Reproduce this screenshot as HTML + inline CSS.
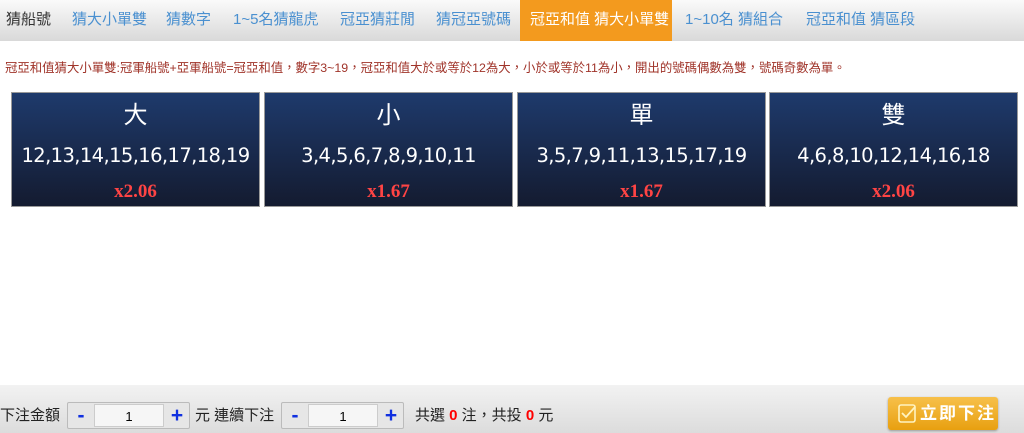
<!DOCTYPE html>
<html><head><meta charset="utf-8"><style>
*{margin:0;padding:0;box-sizing:border-box}
body{width:1024px;height:433px;background:#fff;font-family:"Liberation Sans","Noto Sans CJK TC",sans-serif;position:relative;overflow:hidden}
.nav{position:absolute;left:0;top:0;width:1024px;height:41px;background:linear-gradient(#fafafa,#d9d9d9)}
.nav span{position:absolute;top:0;line-height:40px;font-size:15px;color:#4a90d0;white-space:nowrap}
.nav .act{background:#f39a1e;color:#fff;height:41px;padding:0 10px}
.desc{position:absolute;left:5px;top:58px;font-size:12.4px;color:#a0342a;white-space:nowrap}
.box{position:absolute;top:92px;width:249px;height:115px;background:linear-gradient(#1e3a6c,#141b30);border:1px solid #999;text-align:center;color:#fff}
.box .t{font-size:24px;margin-top:8px;line-height:30px}
.box .n{font-size:19.5px;margin-top:12px;line-height:26px;font-family:"DejaVu Sans","Noto Sans CJK TC",sans-serif;letter-spacing:-0.6px}
.box .o{font-family:"Liberation Serif",serif;font-weight:bold;color:#f44;font-size:19px;margin-top:12px}
.bot{position:absolute;left:0;top:385px;width:1024px;height:48px;background:linear-gradient(#f2f2f2,#dcdcdc)}
.bot .l{position:absolute;top:19px;font-size:15px;color:#222;white-space:nowrap}
.pm{position:absolute;top:17px;width:123px;height:27px;border:1px solid #bbb;background:#e6e6e6;border-radius:2px}
.pm b{position:absolute;top:0;width:26px;line-height:25px;text-align:center;color:#1030e0;font-size:21px}
.pm i{position:absolute;left:26px;top:1px;width:70px;height:23px;background:#f6f6f6;font-style:normal;text-align:center;line-height:23px;font-size:13px;border:1px solid #ccc}
.red{color:#f00;font-weight:bold}
.btn{position:absolute;left:888px;top:397px;width:110px;height:33px;background:linear-gradient(#f7c04a,#e8a010);border-radius:3px;color:#fff;font-weight:bold;font-size:17px;line-height:33px;padding-left:32px;letter-spacing:2px;box-shadow:0 1px 2px #999}
.btn svg{position:absolute;left:10px;top:7px}
</style></head><body>
<div class="nav">
<span style="left:6px;color:#333">猜船號</span>
<span style="left:72px">猜大小單雙</span>
<span style="left:166px">猜數字</span>
<span style="left:233px">1~5名猜龍虎</span>
<span style="left:340px">冠亞猜莊閒</span>
<span style="left:436px">猜冠亞號碼</span>
<span class="act" style="left:520px;width:152px">冠亞和值 猜大小單雙</span>
<span style="left:685px">1~10名 猜組合</span>
<span style="left:806px">冠亞和值 猜區段</span>
</div>
<div class="desc">冠亞和值猜大小單雙:冠軍船號+亞軍船號=冠亞和值，數字3~19，冠亞和值大於或等於12為大，小於或等於11為小，開出的號碼偶數為雙，號碼奇數為單。</div>
<div class="box" style="left:11px"><div class="t">大</div><div class="n">12,13,14,15,16,17,18,19</div><div class="o">x2.06</div></div>
<div class="box" style="left:264px"><div class="t">小</div><div class="n">3,4,5,6,7,8,9,10,11</div><div class="o">x1.67</div></div>
<div class="box" style="left:517px"><div class="t">單</div><div class="n">3,5,7,9,11,13,15,17,19</div><div class="o">x1.67</div></div>
<div class="box" style="left:769px"><div class="t">雙</div><div class="n">4,6,8,10,12,14,16,18</div><div class="o">x2.06</div></div>
<div class="bot">
<span class="l" style="left:0">下注金額</span>
<div class="pm" style="left:67px"><b style="left:0">-</b><i>1</i><b style="left:96px">+</b></div>
<span class="l" style="left:195px">元 連續下注</span>
<div class="pm" style="left:281px"><b style="left:0">-</b><i>1</i><b style="left:96px">+</b></div>
<span class="l" style="left:415px">共選 <span class="red">0</span> 注，共投 <span class="red">0</span> 元</span>
</div>
<div class="btn"><svg width="20" height="20" viewBox="0 0 20 20"><rect x="1" y="1" width="16" height="17" rx="2" fill="none" stroke="#fff3c0" stroke-width="1.6"/><path d="M4 9l4 4 9-10" fill="none" stroke="#fff3c0" stroke-width="1.8"/></svg>立即下注</div>
</body></html>
